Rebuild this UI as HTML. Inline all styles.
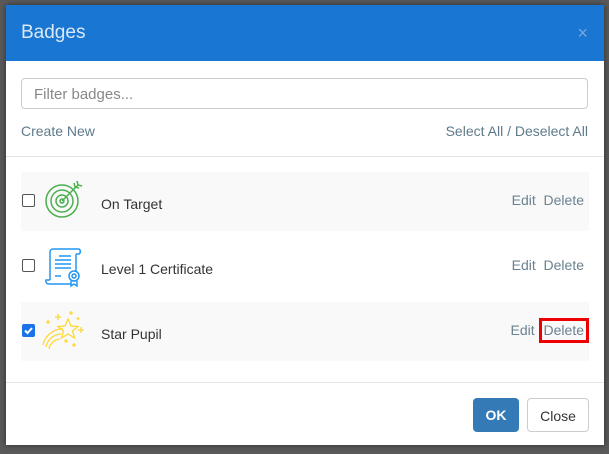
<!DOCTYPE html>
<html><head><style>
body{margin:0;width:609px;height:454px;background:#5a5a5a;font-family:"Liberation Sans",sans-serif;position:relative;overflow:hidden}
.m{position:absolute;left:6px;top:5px;width:598px;height:440px;background:#fff;box-shadow:0 0 6px rgba(0,0,0,.5)}
.h{height:56px;background:#1976d2;color:#dbe8f7;font-size:19px;line-height:56px;padding-left:15px;position:relative}
.x{position:absolute;right:16px;top:0;color:#7aa6dd;font-size:18px}
.inp{position:absolute;left:15px;top:73px;height:31px;border:1px solid #ccc;border-radius:4px;font-size:15px;color:#888;line-height:31px;padding-left:12px;box-sizing:border-box;width:567px}
.l{position:absolute;color:#5f7a8a;font-size:14px}
.hr{position:absolute;left:0;width:598px;height:1px;background:#e5e5e5}
.r{position:absolute;left:15px;width:568px;height:59px}
.r.g{background:#f9f9f9}
.cb{position:absolute;left:1px;top:22px;width:11px;height:11px;border:1px solid #555;border-radius:2px;background:#fff}
.cb.on{background:#1a73e8;border-color:#1a73e8}
.nm{position:absolute;left:80px;top:24px;font-size:14px;color:#333}
.ac{position:absolute;right:5px;top:20px;font-size:14px;color:#6b8291}
.btn{position:absolute;top:393px;height:34px;border-radius:4px;font-size:14px;line-height:34px;text-align:center;box-sizing:border-box}
</style></head><body>
<div class="m">
<div class="h">Badges<span class="x">×</span></div>
<div class="inp">Filter badges...</div>
<div class="l" style="left:15px;top:118px">Create New</div>
<div class="l" style="right:16px;top:118px">Select All / Deselect All</div>
<div class="hr" style="top:151px"></div>
<div class="r g" style="top:167px"><div class="cb"></div>
<svg style="position:absolute;left:22px;top:7px" width="42" height="42" viewBox="0 0 42 42" fill="none" stroke="#4caf50" stroke-width="1.5"><circle cx="19" cy="22" r="16"/><circle cx="19" cy="22" r="11"/><circle cx="19" cy="22" r="6"/><circle cx="19" cy="22" r="2"/><path d="M19 22L35 6M31 4l1 4 4 1M34 2l1 4 4 1"/></svg>
<div class="nm">On Target</div><div class="ac">Edit&nbsp; Delete</div></div>
<div class="r" style="top:232px"><div class="cb"></div>
<svg style="position:absolute;left:24px;top:9px" width="40" height="42" viewBox="0 0 40 42" fill="none" stroke="#2196f3" stroke-width="1.5"><path d="M8 3h26a3 3 0 0 1 0 5h-3M8 3a3 3 0 0 0-3 3v28M5 34H1a3 3 0 0 0 3 4h22M31 8v18M14 10h12M10 14h16M10 18h16M10 22h16M10 30h6"/><circle cx="29" cy="30" r="5"/><circle cx="29" cy="30" r="2"/><path d="M26 35v5l3-2 3 2v-5"/></svg>
<div class="nm">Level 1 Certificate</div><div class="ac">Edit&nbsp; Delete</div></div>
<div class="r g" style="top:297px"><div class="cb on"><svg width="11" height="11" viewBox="0 0 11 11" style="position:absolute;left:0;top:0"><path d="M2 5.5l2.5 2.5 4.5-5" stroke="#fff" stroke-width="2" fill="none"/></svg></div>
<svg style="position:absolute;left:20px;top:5px" width="50" height="50" viewBox="0 0 50 50" fill="none" stroke="#fdd835" stroke-width="1.3"><path d="M27 12l3 7 7 .5-5.5 4.5 2 7-6.5-4-6.5 4 2-7-5.5-4.5 7-.5z"/><path d="M2 38a20 20 0 0 1 20-16M5 40a16 16 0 0 1 15-13M8 42a12 12 0 0 1 11-10"/><path d="M17 7v6M14 10h6M30 4v4M28 6h4M40 20v6M37 23h6M7 13v4M5 15h4M37 10v3M35.5 11.5h3M25 32v4M23 34h4M33 36v4M31 38h4"/></svg>
<div class="nm">Star Pupil</div><div class="ac">Edit <span style="border:3px solid #e00;padding:1px 2px 2px 2px;margin-right:-5px">Delete</span></div></div>
<div class="hr" style="top:377px"></div>
<div class="btn" style="left:467px;width:46px;background:#337ab7;color:#fff;font-weight:bold">OK</div>
<div class="btn" style="left:521px;width:62px;border:1px solid #ccc;color:#333">Close</div>
</div>
</body></html>
